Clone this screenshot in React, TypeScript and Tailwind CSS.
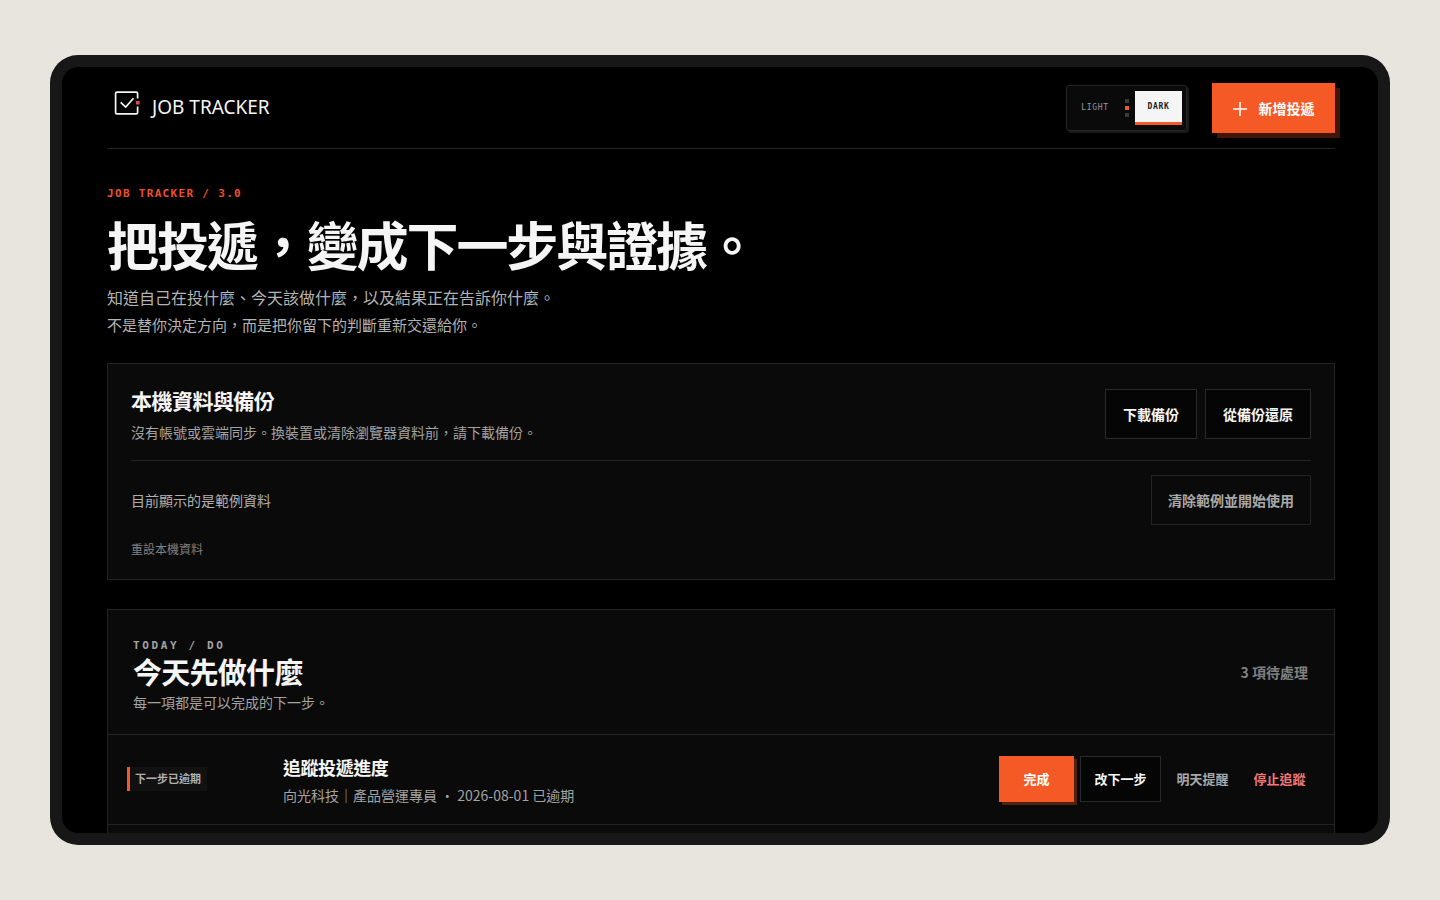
import type { ReactNode } from "react";

function LogoMark() {
  return (
    <svg width="26" height="26" viewBox="0 0 26 26" fill="none" aria-hidden="true" className="mb-2">
      <path
        d="M23.6 8.6V3.6a1.5 1.5 0 0 0-1.5-1.5H3.1a1.5 1.5 0 0 0-1.5 1.5v18.8a1.5 1.5 0 0 0 1.5 1.5h19a1.5 1.5 0 0 0 1.5-1.5v-6"
        stroke="#f5f5f5"
        strokeWidth="1.7"
      />
      <path d="M6.7 12.3l5 4.8 7.8-8.8" stroke="#f5f5f5" strokeWidth="1.7" />
      <rect x="22" y="11" width="3.6" height="3.6" rx="0.6" fill="#e5484d" />
    </svg>
  );
}

function PlusIcon() {
  return (
    <svg width="14" height="14" viewBox="0 0 14 14" aria-hidden="true" className="mt-[2px]">
      <path d="M7 0v14M0 7h14" stroke="currentColor" strokeWidth="1.6" />
    </svg>
  );
}

function ThemeToggle() {
  return (
    <div className="flex items-center rounded-[3px] border border-[#262626] bg-[#0a0a0a] py-[5px] pr-1 pl-1 font-['DejaVu_Sans_Mono',monospace] text-[8px] tracking-[0.08em] shadow-[2px_2px_0_#1a1a1a]">
      <button type="button" className="h-[34px] w-12 text-[#999999]">
        LIGHT
      </button>
      <span className="mx-[6px] flex flex-col gap-[3px]" aria-hidden="true">
        <span className="size-1 bg-[#3a3a3a]" />
        <span className="size-1 bg-[#f15a29]" />
        <span className="size-1 bg-[#3a3a3a]" />
      </span>
      <button
        type="button"
        aria-pressed="true"
        className="h-[34px] w-[47px] border-b-[3px] border-[#f15a29] bg-[#f5f5f5] font-bold text-[#222222]"
      >
        DARK
      </button>
    </div>
  );
}

function OutlineButton({ children, muted = false }: { children: ReactNode; muted?: boolean }) {
  return (
    <button
      type="button"
      className={
        muted
          ? "h-[50px] border border-[#222222] px-4 text-[14px] font-bold text-[#a8a8a8]"
          : "h-[50px] border border-[#2a2a2a] bg-[#050505] px-[17px] text-[14px] font-bold text-[#f5f5f5]"
      }
    >
      {children}
    </button>
  );
}

function BackupPanel() {
  return (
    <section className="mt-[25px] border border-[#242424] bg-[#0a0a0a] px-[23px] pt-5 pb-5">
      <div className="flex items-center justify-between border-b border-[#242424] pb-4">
        <div>
          <h2 className="text-[21px] leading-8 font-bold tracking-tight text-[#f5f5f5]">本機資料與備份</h2>
          <p className="mt-1 text-[14px] leading-6 text-[#a3a3a3]">
            沒有帳號或雲端同步。換裝置或清除瀏覽器資料前，請下載備份。
          </p>
        </div>
        <div className="flex gap-2">
          <OutlineButton>下載備份</OutlineButton>
          <OutlineButton>從備份還原</OutlineButton>
        </div>
      </div>
      <div className="flex items-center justify-between pt-[14px]">
        <p className="text-[14px] leading-6 text-[#b0b0b0]">目前顯示的是範例資料</p>
        <OutlineButton muted>清除範例並開始使用</OutlineButton>
      </div>
      <button type="button" className="mt-[14px] block text-[12px] leading-5 text-[#808080]">
        重設本機資料
      </button>
    </section>
  );
}

function TodayPanel() {
  return (
    <section className="mt-[29px] border border-[#242424] bg-[#0a0a0a] pb-16">
      <header className="flex items-center justify-between border-b border-[#242424] pr-[26px] pl-[25px]">
        <div className="pt-7 pb-5">
          <p className="font-['DejaVu_Sans_Mono',monospace] text-[11px] leading-4 font-bold tracking-[0.24em] text-[#a3a3a3]">
            TODAY / DO
          </p>
          <h2 className="text-[29px] leading-[34px] font-bold tracking-tight text-[#f5f5f5]">今天先做什麼</h2>
          <p className="mt-[2px] text-[14px] leading-6 text-[#a3a3a3]">每一項都是可以完成的下一步。</p>
        </div>
        <p className="text-[14px] leading-6 font-bold text-[#808080]">3 項待處理</p>
      </header>
      <ul>
        <li className="flex items-center border-b border-[#242424] px-[19px] pt-[15px] pb-[17px]">
          <div className="flex w-[156px] shrink-0">
            <span className="w-20 border-l-[3px] border-[#f15a29] bg-[#111111] pb-[2px] pl-[5px] text-[11px] leading-[22px] font-bold text-[#b0b0b0]">
              下一步已逾期
            </span>
          </div>
          <div className="flex-1 pt-[5px]">
            <h3 className="text-[18px] leading-6 font-bold tracking-tight text-[#f5f5f5]">追蹤投遞進度</h3>
            <p className="mt-1 text-[14px] leading-6 text-[#a3a3a3]">向光科技｜產品營運專員 ・ 2026-08-01 已逾期</p>
          </div>
          <div className="flex gap-[6px] text-[13px] font-bold">
            <button type="button" className="h-[46px] w-[75px] bg-[#f55a26] text-white shadow-[3px_3px_0_#51200f]">
              完成
            </button>
            <button type="button" className="h-[46px] w-[81px] border border-[#2a2a2a] bg-[#050505] text-[#f5f5f5]">
              改下一步
            </button>
            <button type="button" className="h-[46px] w-[71px] text-[#a8a8a8]">
              明天提醒
            </button>
            <button type="button" className="h-[46px] w-[71px] text-[#f27878]">
              停止追蹤
            </button>
          </div>
        </li>
      </ul>
    </section>
  );
}

export default function App() {
  return (
    <div
      lang="zh-Hant"
      className="flex h-screen bg-[#e8e5de] px-[50px] py-[55px] font-['Noto_Sans_CJK_TC',sans-serif]"
    >
      <div className="flex flex-1 rounded-[28px] bg-[#171717] p-3">
        <div className="flex-1 overflow-hidden rounded-[16px] bg-black pr-[43px] pl-[45px]">
          <header className="flex items-center justify-between border-b border-[#242424] pt-4 pb-[15px]">
            <a href="#" className="flex items-center gap-3 pb-[2px] pl-[7px] text-[#f5f5f5]">
              <LogoMark />
              <span className="font-['Noto_Sans',sans-serif] text-[19px] leading-6">JOB TRACKER</span>
            </a>
            <div className="flex items-center gap-[25px]">
              <ThemeToggle />
              <button
                type="button"
                className="flex h-[50px] w-[123px] items-center justify-center gap-3 bg-[#f55a26] text-[14px] font-bold text-white shadow-[5px_5px_0_#421607]"
              >
                <PlusIcon />
                新增投遞
              </button>
            </div>
          </header>
          <main>
            <p className="mt-9 font-['DejaVu_Sans_Mono',monospace] text-[11px] leading-[18px] font-bold tracking-[0.12em] text-[#f04e2a]">
              JOB TRACKER / 3.0
            </p>
            <h1 className="mt-[11px] text-[52px] leading-[60px] font-bold tracking-[-0.04em] text-[#f5f5f5]">
              把投遞，變成下一步與證據。
            </h1>
            <p className="mt-[10px] text-[16px] leading-[27px] text-[#b3b3b3]">
              知道自己在投什麼、今天該做什麼，以及結果正在告訴你什麼。
            </p>
            <p className="text-[15px] leading-[27px] text-[#b3b3b3]">
              不是替你決定方向，而是把你留下的判斷重新交還給你。
            </p>
            <BackupPanel />
            <TodayPanel />
          </main>
        </div>
      </div>
    </div>
  );
}
